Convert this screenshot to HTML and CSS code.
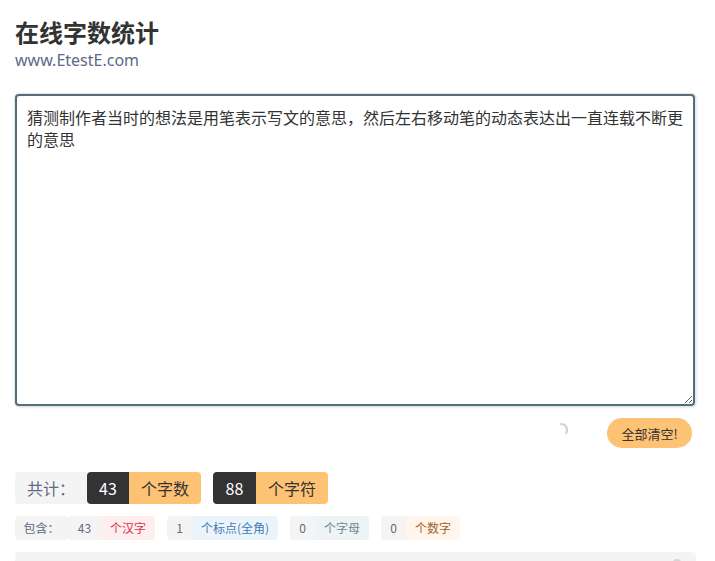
FILE: index.html
```html
<!DOCTYPE html>
<html lang="zh-CN">
<head>
<meta charset="utf-8">
<title>在线字数统计</title>
<link rel="stylesheet" href="styles.css">
</head>
<body>
<div class="page">
  <header class="head">
    <h1 class="title">在线字数统计</h1>
    <div class="site">www.EtestE.com</div>
  </header>
  <textarea class="input">猜测制作者当时的想法是用笔表示写文的意思，然后左右移动笔的动态表达出一直连载不断更的意思</textarea>
  <div class="actions">
    <svg class="spinner" width="16" height="16" viewBox="0 0 16 16"><path d="M8 2 A6 6 0 0 1 13.2 11" fill="none" stroke="#d0d0d0" stroke-width="2" stroke-linecap="round"/></svg>
    <button class="clear">全部清空!</button>
  </div>
  <div class="totals">
    <span class="label">共计：</span>
    <span class="pair"><span class="num">43</span><span class="unit">个字数</span></span>
    <span class="pair"><span class="num">88</span><span class="unit">个字符</span></span>
  </div>
  <div class="contain">
    <span class="tag">包含：</span>
    <span class="chip"><span class="cnum">43</span><span class="cunit red">个汉字</span></span>
    <span class="chip"><span class="cnum">1</span><span class="cunit blue">个标点(全角)</span></span>
    <span class="chip"><span class="cnum">0</span><span class="cunit slate">个字母</span></span>
    <span class="chip"><span class="cnum">0</span><span class="cunit amber">个数字</span></span>
  </div>
  <div class="panel"><span class="knob"></span></div>
</div>
</body>
</html>
```

FILE: styles.css
```css
* { box-sizing: border-box; }
html, body { margin: 0; padding: 0; background: #fff; }
body {
  font-family: "Noto Sans", "Noto Sans CJK SC", sans-serif;
  color: #333;
  height: 561px;
  overflow: hidden;
}
.page {
  padding: 18px 19px 0 15px;
  display: flex;
  flex-direction: column;
}
.head { display: flex; flex-direction: column; }
.title {
  margin: 0;
  font-size: 24px;
  line-height: 30px;
  font-weight: 700;
  color: #333;
}
.site {
  padding-top: 1px;
  font-size: 16px;
  line-height: 22px;
  color: #5d6a86;
}
.input {
  margin-top: 23px;
  width: 680px;
  height: 312px;
  border: 2px solid #546e7a;
  border-radius: 4px;
  padding: 10px;
  font-family: "Noto Sans CJK SC", sans-serif;
  font-size: 16px;
  line-height: 22px;
  color: #333;
  box-shadow: 0 0 0 1px #e3e7ea, 1px 1px 3px rgba(0,0,0,0.18);
  outline: none;
  resize: vertical;
}
.actions {
  margin-top: 12px;
  width: 677px;
  display: flex;
  justify-content: flex-end;
  align-items: center;
  gap: 38px;
}
.spinner { margin-top: -6px; }
.clear {
  width: 85px;
  height: 30px;
  border: 0;
  border-radius: 15px;
  background: #fec275;
  color: #333;
  font-family: "Noto Sans CJK SC", sans-serif;
  font-size: 13px;
  padding: 0;
}
.totals {
  margin-top: 24px;
  display: flex;
  gap: 12px;
  font-family: "Noto Sans CJK SC", sans-serif;
  font-size: 16px;
  line-height: 32px;
}
.label {
  background: #f4f4f5;
  color: #5f6b7e;
  width: 72px;
  text-align: center;
  border-radius: 4px 0 0 4px;
  margin-right: -12px;
}
.pair { display: flex; border-radius: 4px; overflow: hidden; }
.num { background: #333; color: #fff; width: 42px; text-align: center; }
.pair:nth-of-type(3) .num { width: 43px; }
.unit { background: #fec275; color: #333; width: 72px; text-align: center; }
.contain {
  margin-top: 12px;
  display: flex;
  gap: 12px;
  font-family: "Noto Sans CJK SC", sans-serif;
  font-size: 12px;
  line-height: 24px;
}
.tag {
  background: #f4f4f5;
  color: #5f6b7e;
  width: 53px;
  text-align: center;
  border-radius: 4px;
  margin-right: -12px;
}
.chip { display: flex; border-radius: 4px; overflow: hidden; }
.cnum { background: #f4f4f5; color: #5f6b7e; width: 25px; text-align: center; }
.chip:nth-of-type(2) .cnum { width: 33px; }
.cunit { width: 54px; text-align: center; }
.cunit.red { background: #feeef0; color: #d9344f; }
.cunit.blue { background: #ecf4fb; color: #3f7bb5; width: 86px; }
.cunit.slate { background: #eef3f5; color: #6b8790; }
.cunit.amber { background: #fff5ea; color: #a2602a; }
.panel {
  margin-top: 12px;
  width: 681px;
  height: 40px;
  background: #f4f4f4;
  border-radius: 4px;
  position: relative;
}
.knob {
  position: absolute;
  top: 7px;
  right: 14px;
  width: 10px;
  height: 10px;
  border-radius: 50%;
  background: #d6d6d6;
}
```
